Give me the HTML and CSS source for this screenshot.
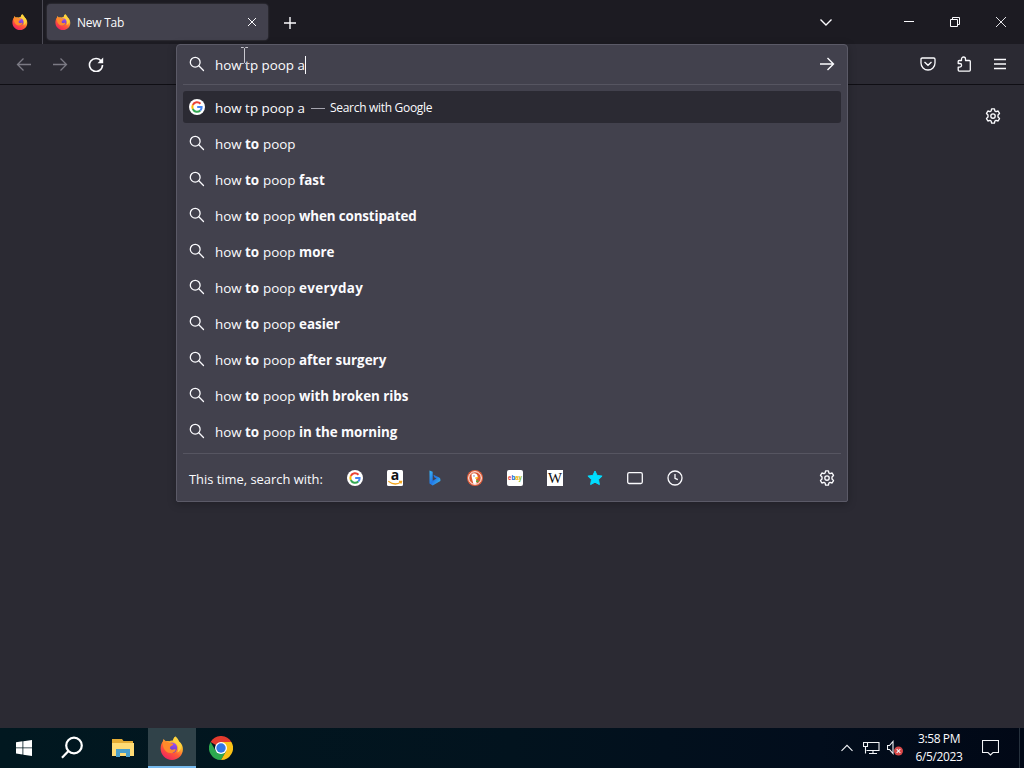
FILE: index.html
```
<!DOCTYPE html>
<html lang="en">
<head>
<meta charset="utf-8">
<title>New Tab</title>
<link rel="stylesheet" href="styles.css">
</head>
<body>
<svg class="defs" aria-hidden="true">
  <defs>
    <linearGradient id="flame" x1=".85" y1="0" x2=".25" y2="1"><stop offset="0" stop-color="#fff14a"/><stop offset=".35" stop-color="#ffb52c"/><stop offset=".62" stop-color="#ff5b35"/><stop offset="1" stop-color="#ee1e62"/></linearGradient>
    <linearGradient id="globe" x1=".6" y1="0" x2=".4" y2="1"><stop offset="0" stop-color="#a34fee"/><stop offset="1" stop-color="#593acb"/></linearGradient>
    <linearGradient id="bingblue" x1="0" y1="0" x2="1" y2="1"><stop offset="0" stop-color="#39b8f5"/><stop offset=".5" stop-color="#2276e8"/><stop offset="1" stop-color="#41c6ee"/></linearGradient>
    <symbol id="firefox" viewBox="0 0 24 24">
      <path fill="url(#flame)" d="M15.3.5c2 1.300 3.100 3 3.600 4.900 1.500.8 2.700 2.500 3.400 4.300C24.700 17 19.600 24 12 24 5.500 24 .6 18.800.6 12.600c0-3.300 1.100-5.500 2.200-7L3.400 2.900l2.400 2.300c1.200-.4 2.300-.3 3.400.1 1.200-.7 2.400-.9 3.600-.8C13.300 3 14 1.600 15.300.5z"/>
      <circle cx="12" cy="11.800" r="5.200" fill="url(#globe)"/>
      <path fill="#ff8a2b" d="M2.600 6.200c2.400-1.200 4.700-.9 6.900.8l3 .6c.8.2.9.700.6 1.200-.6.9-1.900 1-2.500 1.500-.3.600-.4 1.200-.8 1.600.8 1.800 2.600 2.200 4.500 1.400.9-.3 1.700.2 1.300 1-.9 2-3 3.100-5.400 2.800C6 16.600 2.600 13 2.600 6.200z"/>
      <path fill="#ffd23e" d="M15.300.5c-2.500 2.200-2.100 4.600.3 6.600 2.900 2.600 3.600 6.400 1.600 9.500 3-1.400 4.700-4.600 4-8C20.300 5.800 17 4 15.300.5z"/>
    </symbol>
    <symbol id="google" viewBox="0 0 16 16">
      <circle cx="8" cy="8" r="8" fill="#fff"/>
      <g fill="none" stroke-width="2"><path stroke="#ea4335" d="M11.500 4.800A4.700 4.700 0 0 0 3.800 6"/><path stroke="#fbbc05" d="M3.800 6a4.700 4.700 0 0 0 0 4"/><path stroke="#34a853" d="M3.800 10a4.700 4.700 0 0 0 7.500 1.500"/><path stroke="#4285f4" d="M11.300 11.500C12.200 10.700 12.700 9.400 12.600 8H8.200"/></g>
    </symbol>
    <symbol id="search" viewBox="0 0 16 16"><g fill="none" stroke="currentColor" stroke-width="1.300" stroke-linecap="round"><circle cx="6.200" cy="6.200" r="4.900"/><path d="M9.800 9.800 14.500 14.500"/></g></symbol>
    <symbol id="gear" viewBox="0 0 16 16"><g fill="none" stroke="currentColor" stroke-width="1.350" stroke-linejoin="round"><path d="M6.600.9h2.800l.5 2.100 1.100.6 2.100-.6 1.400 2.400L13 6.900v2.200l1.500 1.500-1.400 2.400-2.100-.6-1.100.6-.5 2.100H6.600L6.100 13 5 12.400l-2.100.6-1.400-2.400L3 9.100V6.900L1.500 5.400 2.900 3l2.100.6L6.100 3z"/><circle cx="8" cy="8" r="2.200"/></g></symbol>
  </defs>
</svg>

<header class="tabbar">
  <div class="pinned"><svg class="i16"><use href="#firefox"/></svg></div>
  <div class="tab">
    <svg class="i16"><use href="#firefox"/></svg>
    <span class="tab-title">New Tab</span>
    <svg class="tab-close" viewBox="0 0 10 10"><path d="M1 1l8 8M9 1 1 9"/></svg>
  </div>
  <svg class="newtab" viewBox="0 0 12 12"><path d="M6 0v12M0 6h12"/></svg>
  <div class="window-controls">
    <svg viewBox="0 0 12 12"><path stroke-width="1.400" d="M.5 3.500 6 9l5.500-5.500"/></svg>
    <svg viewBox="0 0 12 12"><path d="M1 5.500h10"/></svg>
    <svg viewBox="0 0 12 12"><path d="M1.500 3.500h7v7h-7zM3.500 3.500v-2h7v7h-2"/></svg>
    <svg viewBox="0 0 12 12"><path stroke-width=".9" d="M1 1l10 10M11 1 1 11"/></svg>
  </div>
</header>

<nav class="toolbar">
  <svg class="dim" viewBox="0 0 16 16"><path d="M15 8.500H1.500M7.500 2.500l-6 6 6 6"/></svg>
  <svg class="dim" viewBox="0 0 16 16"><path d="M1 8.500h13.500M8.500 2.500l6 6-6 6"/></svg>
  <svg viewBox="0 0 16 16"><path stroke-width="1.600" d="M13.300 5.200A6.500 6.500 0 1 0 14.500 9"/><path class="solid" d="M15.200 1.500v5.700H9.500z"/></svg>
  <div class="toolbar-end">
    <svg viewBox="0 0 16 16"><path d="M2.300 2h11.400q1.300 0 1.300 1.300V7a7 7 0 0 1-14 0V3.300Q1 2 2.300 2zM4.500 6 8 9.300 11.500 6"/></svg>
    <svg viewBox="0 0 16 16"><path stroke-linejoin="round" d="M5.500 4.500V3a2 2 0 0 1 4 0v1.500h3.800q1 0 1 1v8.600q0 1-1 1H3.200q-1 0-1-1v-3h1.600a1.800 1.800 0 0 0 0-3.600H2.200v-2q0-1 1-1z"/></svg>
    <svg viewBox="0 0 16 16"><path d="M2 3.500h12M2 8h12M2 12.500h12"/></svg>
  </div>
</nav>

<main class="page"><svg class="i16 page-gear"><use href="#gear"/></svg></main>

<section class="urlbar">
  <div class="inputrow">
    <svg class="i16"><use href="#search"/></svg>
    <span class="typed">how tp poop a</span><i class="caret"></i>
    <svg class="i16 go" viewBox="0 0 16 16"><path d="M1 8h13.500M8.500 2l6 6-6 6"/></svg>
  </div>
  <ul class="results">
    <li class="selected"><svg class="i16"><use href="#google"/></svg><span class="typed">how tp poop a</span><i class="dash"></i><span class="action">Search with Google</span></li>
    <li><svg class="i16"><use href="#search"/></svg><span class="how">how</span><b class="to">to</b><span class="poop">poop</span></li>
    <li><svg class="i16"><use href="#search"/></svg><span class="how">how</span><b class="to">to</b><span class="poop">poop</span><b>fast</b></li>
    <li><svg class="i16"><use href="#search"/></svg><span class="how">how</span><b class="to">to</b><span class="poop">poop</span><b class="tight">when constipated</b></li>
    <li><svg class="i16"><use href="#search"/></svg><span class="how">how</span><b class="to">to</b><span class="poop">poop</span><b>more</b></li>
    <li><svg class="i16"><use href="#search"/></svg><span class="how">how</span><b class="to">to</b><span class="poop">poop</span><b class="loose">everyday</b></li>
    <li><svg class="i16"><use href="#search"/></svg><span class="how">how</span><b class="to">to</b><span class="poop">poop</span><b>easier</b></li>
    <li><svg class="i16"><use href="#search"/></svg><span class="how">how</span><b class="to">to</b><span class="poop">poop</span><b>after surgery</b></li>
    <li><svg class="i16"><use href="#search"/></svg><span class="how">how</span><b class="to">to</b><span class="poop">poop</span><b class="snug">with broken ribs</b></li>
    <li><svg class="i16"><use href="#search"/></svg><span class="how">how</span><b class="to">to</b><span class="poop">poop</span><b class="snug">in the morning</b></li>
  </ul>
  <footer class="engines">
    <span class="engines-label">This time, search with:</span>
    <svg class="i16"><use href="#google"/></svg>
    <svg class="i16 spill" viewBox="0 0 16 16"><rect width="16" height="16" rx="1.500" fill="#fff"/><text x="8" y="9.600" text-anchor="middle" class="amazon">a</text><path d="M1.300 11.300Q8 16.300 14 12M12 11.300h2.600l-.7 2.300" fill="none" stroke="#f4a51c" stroke-width="1.300"/></svg>
    <svg class="i16" viewBox="0 0 16 16"><path fill="url(#bingblue)" d="M2.500.5 5.700 1.700v9L9.500 8.500 7.500 7.500 6.400 4.700l5.800 2.700q1.200.6 1.200 2v1.500L5.700 15.500 2.500 13.500z"/></svg>
    <svg class="i16" viewBox="0 0 16 16"><circle cx="8" cy="8" r="8" fill="#e3603d"/><circle cx="8" cy="8" r="6.300" fill="#de5833" stroke="#fff" stroke-width="1"/><path fill="#fff" d="M4.700 4q2.700-1.800 5 .3 1.300 1.400 1 3.400l-1.600 1.500.5 4.400q-1.900.7-3.300 0L5 8.500q-.8-2.500-.3-4.500z"/><path fill="#fdb913" d="M8.200 7.500q2-.8 3.500-.3L10.500 8.500 8.500 9z"/><path fill="#54a73a" d="m8.900 10.700 2.500-.6v2.200l-2.300-.3z"/><circle cx="7" cy="5.900" r=".6" fill="#2d4f8e"/></svg>
    <svg class="i16" viewBox="0 0 16 16"><rect width="16" height="16" rx="2" fill="#fff"/><text x="1" y="9.900" class="ebay" textLength="14" lengthAdjust="spacingAndGlyphs"><tspan fill="#e53238">e</tspan><tspan fill="#0064d2">b</tspan><tspan fill="#f5af02">a</tspan><tspan fill="#86b817">y</tspan></text></svg>
    <svg class="i16" viewBox="0 0 16 16"><rect width="16" height="16" fill="#fff"/><text x="8" y="13" text-anchor="middle" class="wiki" textLength="14" lengthAdjust="spacingAndGlyphs">W</text></svg>
    <svg class="i16" viewBox="0 0 16 16"><path fill="#00ddff" stroke="#00ddff" stroke-linejoin="round" d="m8 1 2.100 4.400 5 .7-3.600 3.500.9 5L8 12.200l-4.400 2.400.9-5L.9 6.100l5-.7z"/></svg>
    <svg class="i16 line" viewBox="0 0 16 16"><rect x=".7" y="2.700" width="14.600" height="10.800" rx="1.500"/></svg>
    <svg class="i16 line" viewBox="0 0 16 16"><circle cx="8" cy="8" r="7"/><path d="M8 4v4.300l2.800 1.400"/></svg>
    <svg class="i16 engines-gear"><use href="#gear"/></svg>
  </footer>
</section>

<svg class="ibeam" viewBox="0 0 9 17"><path d="M1 .5h2.500L4.500 1.500 5.500.5H8M4.500 1.500v14M1 16.500h2.500l1-1 1 1H8"/></svg>

<footer class="taskbar">
  <div class="task"><svg class="win" viewBox="0 0 16 16"><path d="M0 2.200 6.500 1.300v6.200H0zM7.300 1.200 16 0v7.500H7.300zM0 8.300h6.500v6.200L0 13.600zM7.300 8.300H16V16l-8.700-1.200z"/></svg></div>
  <div class="task"><svg class="find" viewBox="0 0 24 24"><circle cx="14" cy="9.500" r="7.800"/><path d="M8.500 15 2 21.800"/></svg></div>
  <div class="task wide"><svg class="folder" viewBox="0 0 22 20"><path fill="#e5ad35" d="M0 1h10l1.500 2H21v5H0z"/><path fill="#ffdc75" d="M0 5h22v13H0z"/><path fill="#4a9fca" d="M4 11h14v8h-4v-4H8v4H4z"/></svg></div>
  <div class="task active"><svg class="i24"><use href="#firefox"/></svg></div>
  <div class="task last"><svg class="i24" viewBox="0 0 24 24"><path fill="#e33b2e" d="M12 12 1.600 6A12 12 0 0 1 22.400 6z"/><path fill="#2da94f" d="M1.600 6A12 12 0 0 0 12 24l5.200-9L12 12 6.800 15z"/><path fill="#fbc116" d="M17.200 15 12 24A12 12 0 0 0 22.400 6H12z"/><circle cx="12" cy="12" r="6" fill="#fff"/><circle cx="12" cy="12" r="4.700" fill="#3277e6"/></svg></div>
  <div class="tray">
    <svg class="t-up" viewBox="0 0 12 8"><path d="M.5 6.800 6 1.300l5.500 5.500"/></svg>
    <svg class="t-net" viewBox="0 0 17 14"><path d="M5 1.500h11v8H3.500M10 9.500v3M6 12.500h8M.5 1.500h4v4h-4zM2.500 5.500v7"/></svg>
    <svg class="t-vol" viewBox="0 0 16 16"><path d="M.5 5.500h2l3.500-4v12l-3.500-4h-2z"/><circle cx="11.500" cy="11" r="4.500" class="mute"/><path d="m9.700 9.200 3.600 3.600m0-3.600-3.600 3.600"/></svg>
    <div class="clock"><span>3:58 PM</span><span>6/5/2023</span></div>
    <svg class="t-note" viewBox="0 0 17 17"><path d="M.5.500h16v12H11L8.500 15 6 12.500H.5z"/></svg>
    <i class="peek"></i>
  </div>
</footer>
</body>
</html>
```
FILE: styles.css
```
* { box-sizing: border-box; }
body {
  margin: 0; width: 1024px; height: 768px; overflow: hidden; position: relative;
  display: flex; flex-direction: column;
  background: #2b2a33; color: #fbfbfe;
  font-family: "Open Sans", "Noto Sans", sans-serif; font-size: 13.4px;
}
svg { display: block; flex: none; }
.defs { position: absolute; width: 0; height: 0; }
.i16 { width: 16px; height: 16px; }
.i24 { width: 24px; height: 24px; }

.tabbar { flex: none; height: 44px; background: #1c1b22; display: flex; align-items: center; }
.pinned { width: 43px; height: 44px; padding-left: 12px; display: flex; align-items: center; border-right: 1px solid #4b4a54; }
.tab {
  width: 221px; height: 36px; margin-left: 4px; padding: 0 11px 0 8px;
  display: flex; align-items: center; border-radius: 4px; background: #42414d;
  box-shadow: 0 0 2px rgba(128,128,142,.5);
}
.tab-title { margin-left: 6px; font-size: 12px; letter-spacing: -.25px; padding-top: 1px; }
.tab-close { width: 10px; height: 10px; margin-left: auto; }
.tab-close, .newtab, .window-controls svg { fill: none; stroke: #fbfbfe; stroke-width: 1; }
.newtab { width: 12px; height: 12px; margin: 1px 0 0 16px; stroke-width: 1.4; }
.window-controls { margin-left: auto; display: flex; align-items: center; padding-right: 17px; gap: 34px; }
.window-controls svg { width: 12px; height: 12px; }
.window-controls svg:first-child { margin-right: 37px; }

.toolbar {
  flex: none; height: 41px; padding: 0 16px; display: flex; align-items: center; gap: 20px;
  border-bottom: 1px solid #0f0e14; background: #2b2a33;
}
.toolbar svg { width: 16px; height: 16px; fill: none; stroke: #fbfbfe; stroke-width: 1.3; }
.toolbar .dim { stroke: #7b7a84; }
.toolbar .solid { fill: #fbfbfe; stroke: none; }
.toolbar-end { margin-left: auto; display: flex; gap: 20px; }

.page { flex: 1; padding: 23px 23px 0 0; }
.page-gear { margin-left: auto; }

.urlbar {
  position: absolute; left: 176px; top: 44px; width: 672px; height: 458px;
  display: flex; flex-direction: column; padding: 0 6px;
  background: #42414d; border: 1px solid #5b5a67; border-radius: 4px 4px 2px 2px;
  box-shadow: 0 2px 8px rgba(0,0,0,.25);
}
.inputrow { height: 40px; padding: 0 6px; display: flex; align-items: center; border-bottom: 1px solid #565561; }
.inputrow .i16 { margin-bottom: 1px; }
.typed { margin-left: 10px; width: 90px; font-size: 13.4px; white-space: nowrap; padding-top: 1px; }
.caret { width: 1px; height: 18px; background: #fbfbfe; }
.inputrow .go { margin-left: auto; fill: none; stroke: #fbfbfe; stroke-width: 1.4; }
.results { list-style: none; margin: 6px 0 0; padding: 0; display: flex; flex-direction: column; gap: 4px; }
.results li { height: 32px; padding: 0 6px; border-radius: 3px; display: flex; align-items: center; white-space: nowrap; }
.results .selected { background: #2b2a33; }
.results span, .results b { padding-top: 2px; }
.results .selected span { padding-top: 1px; }
.how { margin-left: 10px; width: 30px; }
.to { width: 18px; }
.poop { width: 36px; }
.tight { letter-spacing: -.14px; }
.snug { letter-spacing: -.06px; }
.loose { letter-spacing: .35px; }
.dash { width: 14px; height: 1px; margin: 2px 5px 0 6px; background: #a5a4ae; }
.results .action { font-size: 12px; letter-spacing: -.3px; padding-top: 0; }
.engines { flex: 1; margin-top: 6px; padding: 0 6px; border-top: 1px solid #565561; display: flex; align-items: center; gap: 24px; }
.engines-label { width: 134px; font-size: 12.9px; white-space: nowrap; padding-top: 2px; }
.engines-gear { margin-left: auto; }
.line { fill: none; stroke: #fbfbfe; stroke-width: 1.3; }
.spill { overflow: visible; }
.amazon { font: bold 14px "Open Sans", sans-serif; fill: #111; }
.ebay { font: bold 6.5px "Liberation Sans", sans-serif; }
.wiki { font: 15px "Liberation Serif", serif; fill: #111; }
.ibeam { position: absolute; left: 240px; top: 47px; width: 9px; height: 17px; fill: none; stroke: #c9c8d0; stroke-width: 1; }

.taskbar { flex: none; height: 40px; display: flex; background: linear-gradient(90deg, #011820, #02131e 50%, #020d1c 80%, #010816); }
.task { width: 48px; display: flex; align-items: center; justify-content: center; }
.task.wide { width: 52px; padding-left: 1px; }
.task.last { width: 50px; }
.task.active { background: #304249; border-bottom: 2px solid #76b9ed; }
.task.active svg { margin-top: 2px; }
.win { width: 16px; height: 16px; fill: #fff; }
.find { width: 24px; height: 24px; fill: none; stroke: #fff; stroke-width: 2.2; }
.folder { width: 22px; height: 20px; }
.tray { margin-left: auto; display: flex; align-items: center; }
.tray svg { fill: none; stroke: #f2f4f7; stroke-width: 1.1; }
.t-up { width: 12px; height: 8px; margin-right: 10px; }
.t-net { width: 17px; height: 14px; margin-right: 7px; }
.t-vol { width: 16px; height: 16px; }
.t-vol .mute { fill: #d84848; stroke: none; }
.clock { width: 72px; display: flex; flex-direction: column; align-items: center; font-size: 12px; line-height: 18px; letter-spacing: -.4px; }
.t-note { width: 17px; height: 17px; margin-left: 7px; }
.peek { width: 1px; height: 40px; margin: 0 4px 0 20px; background: #26313d; }
```
